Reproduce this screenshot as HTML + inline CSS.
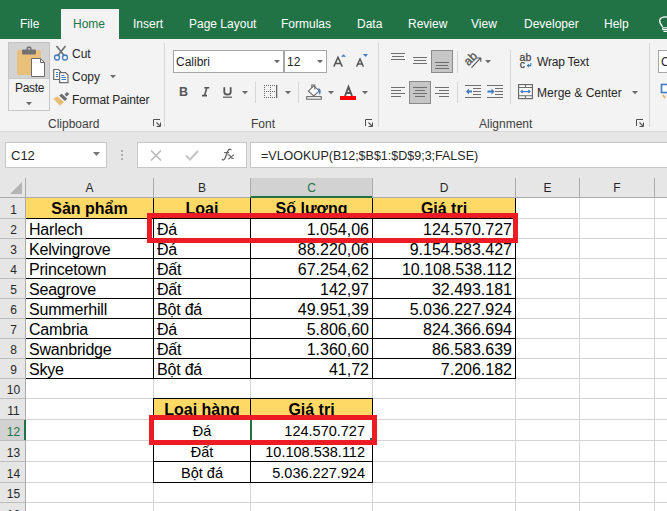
<!DOCTYPE html>
<html><head><meta charset="utf-8">
<style>
html,body{margin:0;padding:0;width:667px;height:511px;overflow:hidden;background:#fff;font-family:"Liberation Sans", sans-serif;}
body>div,body>span,body>svg{position:absolute;}
span{white-space:nowrap;}
</style></head><body>
<div style="left:0px;top:0px;width:667px;height:39px;background:#217346"></div><div style="left:61px;top:9px;width:58px;height:30px;background:#f3f3f3"></div><span style="left:20px;top:17px;font-size:12px;color:#ffffff;line-height:14px">File</span><span style="left:73px;top:17px;font-size:12px;color:#217346;line-height:14px">Home</span><span style="left:133px;top:17px;font-size:12px;color:#ffffff;line-height:14px">Insert</span><span style="left:189px;top:17px;font-size:12px;color:#ffffff;line-height:14px">Page Layout</span><span style="left:281px;top:17px;font-size:12px;color:#ffffff;line-height:14px">Formulas</span><span style="left:357px;top:17px;font-size:12px;color:#ffffff;line-height:14px">Data</span><span style="left:408px;top:17px;font-size:12px;color:#ffffff;line-height:14px">Review</span><span style="left:471px;top:17px;font-size:12px;color:#ffffff;line-height:14px">View</span><span style="left:524px;top:17px;font-size:12px;color:#ffffff;line-height:14px">Developer</span><span style="left:604px;top:17px;font-size:12px;color:#ffffff;line-height:14px">Help</span><div style="left:0px;top:39px;width:667px;height:92px;background:#f3f3f3"></div><div style="left:0px;top:131px;width:667px;height:1px;background:#d9d9d9"></div><div style="left:0px;top:132px;width:667px;height:46px;background:#e6e6e6"></div><div style="left:8px;top:42px;width:42px;height:37px;background:#d3d3d3;box-sizing:border-box;border:1px solid #c3c3c3;border-bottom:none"></div><div style="left:8px;top:78px;width:42px;height:33px;box-sizing:border-box;border:1px solid #c8c8c8"></div><span style="left:15px;top:81px;font-size:12px;color:#262626;line-height:14px;letter-spacing:-0.3px">Paste</span><svg style="left:26px;top:102px;" width="6" height="4" viewBox="0 0 6 4"><path d="M0 0 H6 L3 3.2 Z" fill="#6a6a6a"/></svg><span style="left:72px;top:47px;font-size:12px;color:#262626;line-height:14px">Cut</span><span style="left:72px;top:70px;font-size:12px;color:#262626;line-height:14px">Copy</span><svg style="left:110px;top:75px;" width="6" height="4" viewBox="0 0 6 4"><path d="M0 0 H6 L3 3.2 Z" fill="#6a6a6a"/></svg><span style="left:72px;top:93px;font-size:12px;color:#262626;line-height:14px;letter-spacing:-0.15px">Format Painter</span><span style="left:48px;top:117px;font-size:12px;color:#404040;line-height:14px">Clipboard</span><div style="left:164px;top:43px;width:1px;height:84px;background:#d6d6d6"></div><div style="left:173px;top:50px;width:111px;height:23px;box-sizing:border-box;border:1px solid #a6a6a6;background:#fff"></div><div style="left:284px;top:50px;width:43px;height:23px;box-sizing:border-box;border:1px solid #a6a6a6;background:#fff"></div><span style="left:176px;top:55px;font-size:12px;color:#262626;line-height:14px">Calibri</span><span style="left:287px;top:55px;font-size:12px;color:#262626;line-height:14px">12</span><svg style="left:274px;top:60px;" width="6" height="4" viewBox="0 0 6 4"><path d="M0 0 H6 L3 3.2 Z" fill="#6a6a6a"/></svg><svg style="left:317px;top:60px;" width="6" height="4" viewBox="0 0 6 4"><path d="M0 0 H6 L3 3.2 Z" fill="#6a6a6a"/></svg><span style="left:179px;top:85px;font-size:12.5px;font-weight:bold;color:#555;line-height:14px">B</span><svg style="left:242px;top:91px;" width="6" height="4" viewBox="0 0 6 4"><path d="M0 0 H6 L3 3.2 Z" fill="#6a6a6a"/></svg><div style="left:255px;top:82px;width:1px;height:21px;background:#d6d6d6"></div><svg style="left:285px;top:91px;" width="6" height="4" viewBox="0 0 6 4"><path d="M0 0 H6 L3 3.2 Z" fill="#6a6a6a"/></svg><div style="left:298px;top:82px;width:1px;height:21px;background:#d6d6d6"></div><svg style="left:328px;top:91px;" width="6" height="4" viewBox="0 0 6 4"><path d="M0 0 H6 L3 3.2 Z" fill="#6a6a6a"/></svg><svg style="left:362px;top:91px;" width="6" height="4" viewBox="0 0 6 4"><path d="M0 0 H6 L3 3.2 Z" fill="#6a6a6a"/></svg><span style="left:251px;top:117px;font-size:12px;color:#404040;line-height:14px">Font</span><div style="left:378px;top:43px;width:1px;height:84px;background:#d6d6d6"></div><div style="left:431px;top:50px;width:22px;height:23px;background:#c6c6c6;box-sizing:border-box;border:1px solid #8a8a8a"></div><div style="left:457px;top:51px;width:1px;height:22px;background:#d6d6d6"></div><svg style="left:485px;top:60px;" width="6" height="4" viewBox="0 0 6 4"><path d="M0 0 H6 L3 3.2 Z" fill="#6a6a6a"/></svg><div style="left:409px;top:81px;width:22px;height:23px;background:#c6c6c6;box-sizing:border-box;border:1px solid #8a8a8a"></div><div style="left:457px;top:82px;width:1px;height:21px;background:#d6d6d6"></div><div style="left:510px;top:50px;width:1px;height:54px;background:#d6d6d6"></div><span style="left:537px;top:55px;font-size:12px;color:#262626;line-height:14px;letter-spacing:-0.2px">Wrap Text</span><span style="left:537px;top:86px;font-size:12px;color:#262626;line-height:14px">Merge &amp; Center</span><svg style="left:632px;top:91px;" width="6" height="4" viewBox="0 0 6 4"><path d="M0 0 H6 L3 3.2 Z" fill="#6a6a6a"/></svg><span style="left:479px;top:117px;font-size:12px;color:#404040;line-height:14px">Alignment</span><div style="left:649px;top:43px;width:1px;height:84px;background:#d6d6d6"></div><div style="left:658px;top:50px;width:12px;height:23px;box-sizing:border-box;border:1px solid #a6a6a6;background:#fff"></div><span style="left:661px;top:55px;font-size:12px;color:#262626;line-height:14px">C</span><div style="left:5px;top:142px;width:102px;height:26px;box-sizing:border-box;border:1px solid #c6c6c6;background:#fff"></div><span style="left:11px;top:149px;font-size:13px;color:#262626;line-height:14px">C12</span><svg style="left:93px;top:152px;" width="7" height="4" viewBox="0 0 7 4"><path d="M0 0 H7 L3.5 4 Z" fill="#777"/></svg><svg style="left:120px;top:149px;" width="4" height="12" viewBox="0 0 4 12"><circle cx="2" cy="2" r="1" fill="#9a9a9a"/><circle cx="2" cy="6" r="1" fill="#9a9a9a"/><circle cx="2" cy="10" r="1" fill="#9a9a9a"/></svg><div style="left:137px;top:142px;width:110px;height:26px;box-sizing:border-box;border:1px solid #c6c6c6;background:#fff"></div><svg style="left:150px;top:150px;" width="12" height="11" viewBox="0 0 12 11"><path d="M1 0.5 L11 10.5 M11 0.5 L1 10.5" stroke="#b8b8b8" stroke-width="1.5"/></svg><svg style="left:185px;top:150px;" width="14" height="11" viewBox="0 0 14 11"><path d="M1 5.5 L5 9.5 L13 1" stroke="#c4c4c4" stroke-width="2" fill="none"/></svg><svg style="left:0;top:135px" width="667" height="40"><g transform="translate(0 -135)" fill="none" stroke="#666" stroke-linecap="round"><path d="M222.4 159.6 Q223.8 160.6 225 158.2 L227.9 151 Q229 148.6 230.9 149.6" stroke-width="1.4"/><path d="M224.6 152.6 H228.6" stroke-width="1.2"/><path d="M228.2 155 Q229.6 154.6 230.4 156.6 Q231.3 158.8 233.2 158.4" stroke-width="1.2"/><path d="M233.6 154.9 L228.6 158.9" stroke-width="1.2"/></g></svg><div style="left:250px;top:142px;width:420px;height:26px;box-sizing:border-box;border:1px solid #c6c6c6;background:#fff"></div><span style="left:261px;top:149px;font-size:12.5px;color:#262626;line-height:14px">=VLOOKUP(B12;$B$1:$D$9;3;FALSE)</span><div style="left:0px;top:178px;width:667px;height:19px;background:#e6e6e6"></div><div style="left:250px;top:178px;width:122px;height:19px;background:#d2d2d2"></div><div style="left:0px;top:197px;width:667px;height:1px;background:#ababab"></div><div style="left:250px;top:196px;width:122px;height:2px;background:#217346"></div><div style="left:153px;top:178px;width:1px;height:19px;background:#ababab"></div><div style="left:250px;top:178px;width:1px;height:19px;background:#ababab"></div><div style="left:372px;top:178px;width:1px;height:19px;background:#ababab"></div><div style="left:515px;top:178px;width:1px;height:19px;background:#ababab"></div><div style="left:579px;top:178px;width:1px;height:19px;background:#ababab"></div><div style="left:654px;top:178px;width:1px;height:19px;background:#ababab"></div><div style="left:25px;top:178px;width:1px;height:334px;background:#ababab"></div><span style="left:26px;top:181px;width:127px;text-align:center;font-size:12px;line-height:14px;color:#262626">A</span><span style="left:154px;top:181px;width:96px;text-align:center;font-size:12px;line-height:14px;color:#262626">B</span><span style="left:251px;top:181px;width:121px;text-align:center;font-size:12px;line-height:14px;color:#217346">C</span><span style="left:373px;top:181px;width:142px;text-align:center;font-size:12px;line-height:14px;color:#262626">D</span><span style="left:516px;top:181px;width:63px;text-align:center;font-size:12px;line-height:14px;color:#262626">E</span><span style="left:580px;top:181px;width:74px;text-align:center;font-size:12px;line-height:14px;color:#262626">F</span><svg style="left:9px;top:181px" width="14" height="14"><path d="M13 1 V13 H1 Z" fill="#b4b4b4"/></svg><div style="left:0px;top:198px;width:25px;height:313px;background:#e6e6e6"></div><div style="left:0px;top:420px;width:25px;height:20px;background:#d2d2d2"></div><div style="left:0px;top:218px;width:25px;height:1px;background:#bdbdbd"></div><div style="left:0px;top:238px;width:25px;height:1px;background:#bdbdbd"></div><div style="left:0px;top:258px;width:25px;height:1px;background:#bdbdbd"></div><div style="left:0px;top:278px;width:25px;height:1px;background:#bdbdbd"></div><div style="left:0px;top:298px;width:25px;height:1px;background:#bdbdbd"></div><div style="left:0px;top:318px;width:25px;height:1px;background:#bdbdbd"></div><div style="left:0px;top:338px;width:25px;height:1px;background:#bdbdbd"></div><div style="left:0px;top:358px;width:25px;height:1px;background:#bdbdbd"></div><div style="left:0px;top:378px;width:25px;height:1px;background:#bdbdbd"></div><div style="left:0px;top:398px;width:25px;height:1px;background:#bdbdbd"></div><div style="left:0px;top:419px;width:25px;height:1px;background:#bdbdbd"></div><div style="left:0px;top:440px;width:25px;height:1px;background:#bdbdbd"></div><div style="left:0px;top:461px;width:25px;height:1px;background:#bdbdbd"></div><div style="left:0px;top:482px;width:25px;height:1px;background:#bdbdbd"></div><div style="left:0px;top:502px;width:25px;height:1px;background:#bdbdbd"></div><div style="left:24px;top:420px;width:2px;height:20px;background:#217346"></div><span style="left:1px;top:203px;width:25px;text-align:center;font-size:12px;line-height:14px;color:#262626">1</span><span style="left:1px;top:223px;width:25px;text-align:center;font-size:12px;line-height:14px;color:#262626">2</span><span style="left:1px;top:243px;width:25px;text-align:center;font-size:12px;line-height:14px;color:#262626">3</span><span style="left:1px;top:263px;width:25px;text-align:center;font-size:12px;line-height:14px;color:#262626">4</span><span style="left:1px;top:283px;width:25px;text-align:center;font-size:12px;line-height:14px;color:#262626">5</span><span style="left:1px;top:303px;width:25px;text-align:center;font-size:12px;line-height:14px;color:#262626">6</span><span style="left:1px;top:323px;width:25px;text-align:center;font-size:12px;line-height:14px;color:#262626">7</span><span style="left:1px;top:343px;width:25px;text-align:center;font-size:12px;line-height:14px;color:#262626">8</span><span style="left:1px;top:363px;width:25px;text-align:center;font-size:12px;line-height:14px;color:#262626">9</span><span style="left:1px;top:383px;width:25px;text-align:center;font-size:12px;line-height:14px;color:#262626">10</span><span style="left:1px;top:404px;width:25px;text-align:center;font-size:12px;line-height:14px;color:#262626">11</span><span style="left:1px;top:425px;width:25px;text-align:center;font-size:12px;line-height:14px;color:#217346">12</span><span style="left:1px;top:446px;width:25px;text-align:center;font-size:12px;line-height:14px;color:#262626">13</span><span style="left:1px;top:467px;width:25px;text-align:center;font-size:12px;line-height:14px;color:#262626">14</span><span style="left:1px;top:487px;width:25px;text-align:center;font-size:12px;line-height:14px;color:#262626">15</span><span style="left:1px;top:508px;width:25px;text-align:center;font-size:12px;line-height:14px;color:#262626">16</span><div style="left:26px;top:198px;width:641px;height:313px;background:#fff"></div><div style="left:26px;top:218px;width:641px;height:1px;background:#d4d4d4"></div><div style="left:26px;top:238px;width:641px;height:1px;background:#d4d4d4"></div><div style="left:26px;top:258px;width:641px;height:1px;background:#d4d4d4"></div><div style="left:26px;top:278px;width:641px;height:1px;background:#d4d4d4"></div><div style="left:26px;top:298px;width:641px;height:1px;background:#d4d4d4"></div><div style="left:26px;top:318px;width:641px;height:1px;background:#d4d4d4"></div><div style="left:26px;top:338px;width:641px;height:1px;background:#d4d4d4"></div><div style="left:26px;top:358px;width:641px;height:1px;background:#d4d4d4"></div><div style="left:26px;top:378px;width:641px;height:1px;background:#d4d4d4"></div><div style="left:26px;top:398px;width:641px;height:1px;background:#d4d4d4"></div><div style="left:26px;top:419px;width:641px;height:1px;background:#d4d4d4"></div><div style="left:26px;top:440px;width:641px;height:1px;background:#d4d4d4"></div><div style="left:26px;top:461px;width:641px;height:1px;background:#d4d4d4"></div><div style="left:26px;top:482px;width:641px;height:1px;background:#d4d4d4"></div><div style="left:26px;top:502px;width:641px;height:1px;background:#d4d4d4"></div><div style="left:153px;top:198px;width:1px;height:313px;background:#d4d4d4"></div><div style="left:250px;top:198px;width:1px;height:313px;background:#d4d4d4"></div><div style="left:372px;top:198px;width:1px;height:313px;background:#d4d4d4"></div><div style="left:515px;top:198px;width:1px;height:313px;background:#d4d4d4"></div><div style="left:579px;top:198px;width:1px;height:313px;background:#d4d4d4"></div><div style="left:654px;top:198px;width:1px;height:313px;background:#d4d4d4"></div><div style="left:26px;top:198px;width:489px;height:20px;background:#ffd966"></div><div style="left:154px;top:399px;width:218px;height:20px;background:#ffd966"></div><div style="left:153px;top:198px;width:1px;height:181px;background:#000"></div><div style="left:250px;top:198px;width:1px;height:181px;background:#000"></div><div style="left:372px;top:198px;width:1px;height:181px;background:#000"></div><div style="left:515px;top:198px;width:1px;height:181px;background:#000"></div><div style="left:26px;top:218px;width:490px;height:1px;background:#000"></div><div style="left:26px;top:238px;width:490px;height:1px;background:#000"></div><div style="left:26px;top:258px;width:490px;height:1px;background:#000"></div><div style="left:26px;top:278px;width:490px;height:1px;background:#000"></div><div style="left:26px;top:298px;width:490px;height:1px;background:#000"></div><div style="left:26px;top:318px;width:490px;height:1px;background:#000"></div><div style="left:26px;top:338px;width:490px;height:1px;background:#000"></div><div style="left:26px;top:358px;width:490px;height:1px;background:#000"></div><div style="left:26px;top:378px;width:490px;height:1px;background:#000"></div><div style="left:153px;top:398px;width:1px;height:85px;background:#000"></div><div style="left:250px;top:398px;width:1px;height:85px;background:#000"></div><div style="left:372px;top:398px;width:1px;height:85px;background:#000"></div><div style="left:153px;top:398px;width:220px;height:1px;background:#000"></div><div style="left:153px;top:419px;width:220px;height:1px;background:#000"></div><div style="left:153px;top:440px;width:220px;height:1px;background:#000"></div><div style="left:153px;top:461px;width:220px;height:1px;background:#000"></div><div style="left:153px;top:482px;width:220px;height:1px;background:#000"></div><div style="left:26px;top:198px;width:127px;height:20px;overflow:hidden;box-sizing:border-box;"><span style="position:absolute;left:0;right:0;bottom:0;;text-align:center;font-size:16px;line-height:16px;color:#000;font-weight:bold;bottom:1px">Sản phẩm</span></div><div style="left:154px;top:198px;width:96px;height:20px;overflow:hidden;box-sizing:border-box;"><span style="position:absolute;left:0;right:0;bottom:0;;text-align:center;font-size:16px;line-height:16px;color:#000;font-weight:bold;bottom:1px">Loại</span></div><div style="left:251px;top:198px;width:121px;height:20px;overflow:hidden;box-sizing:border-box;"><span style="position:absolute;left:0;right:0;bottom:0;;text-align:center;font-size:16px;line-height:16px;color:#000;font-weight:bold;bottom:1px">Số lượng</span></div><div style="left:373px;top:198px;width:142px;height:20px;overflow:hidden;box-sizing:border-box;"><span style="position:absolute;left:0;right:0;bottom:0;;text-align:center;font-size:16px;line-height:16px;color:#000;font-weight:bold;bottom:1px">Giá trị</span></div><div style="left:26px;top:219px;width:127px;height:19px;overflow:hidden;box-sizing:border-box;padding-left:3px"><span style="position:absolute;left:0;right:0;bottom:0;padding-left:3px;text-align:left;font-size:16px;line-height:16px;color:#000;letter-spacing:-0.2px">Harlech</span></div><div style="left:154px;top:219px;width:96px;height:19px;overflow:hidden;box-sizing:border-box;padding-left:3px"><span style="position:absolute;left:0;right:0;bottom:0;padding-left:3px;text-align:left;font-size:16px;line-height:16px;color:#000;letter-spacing:-0.2px">Đá</span></div><div style="left:251px;top:219px;width:121px;height:19px;overflow:hidden;box-sizing:border-box;padding-right:3px"><span style="position:absolute;left:0;right:0;bottom:0;padding-right:3px;text-align:right;font-size:16px;line-height:16px;color:#000;">1.054,06</span></div><div style="left:373px;top:219px;width:142px;height:19px;overflow:hidden;box-sizing:border-box;padding-right:3px"><span style="position:absolute;left:0;right:0;bottom:0;padding-right:3px;text-align:right;font-size:16px;line-height:16px;color:#000;">124.570.727</span></div><div style="left:26px;top:239px;width:127px;height:19px;overflow:hidden;box-sizing:border-box;padding-left:3px"><span style="position:absolute;left:0;right:0;bottom:0;padding-left:3px;text-align:left;font-size:16px;line-height:16px;color:#000;letter-spacing:-0.2px">Kelvingrove</span></div><div style="left:154px;top:239px;width:96px;height:19px;overflow:hidden;box-sizing:border-box;padding-left:3px"><span style="position:absolute;left:0;right:0;bottom:0;padding-left:3px;text-align:left;font-size:16px;line-height:16px;color:#000;letter-spacing:-0.2px">Đá</span></div><div style="left:251px;top:239px;width:121px;height:19px;overflow:hidden;box-sizing:border-box;padding-right:3px"><span style="position:absolute;left:0;right:0;bottom:0;padding-right:3px;text-align:right;font-size:16px;line-height:16px;color:#000;">88.220,06</span></div><div style="left:373px;top:239px;width:142px;height:19px;overflow:hidden;box-sizing:border-box;padding-right:3px"><span style="position:absolute;left:0;right:0;bottom:0;padding-right:3px;text-align:right;font-size:16px;line-height:16px;color:#000;">9.154.583.427</span></div><div style="left:26px;top:259px;width:127px;height:19px;overflow:hidden;box-sizing:border-box;padding-left:3px"><span style="position:absolute;left:0;right:0;bottom:0;padding-left:3px;text-align:left;font-size:16px;line-height:16px;color:#000;letter-spacing:-0.2px">Princetown</span></div><div style="left:154px;top:259px;width:96px;height:19px;overflow:hidden;box-sizing:border-box;padding-left:3px"><span style="position:absolute;left:0;right:0;bottom:0;padding-left:3px;text-align:left;font-size:16px;line-height:16px;color:#000;letter-spacing:-0.2px">Đất</span></div><div style="left:251px;top:259px;width:121px;height:19px;overflow:hidden;box-sizing:border-box;padding-right:3px"><span style="position:absolute;left:0;right:0;bottom:0;padding-right:3px;text-align:right;font-size:16px;line-height:16px;color:#000;">67.254,62</span></div><div style="left:373px;top:259px;width:142px;height:19px;overflow:hidden;box-sizing:border-box;padding-right:3px"><span style="position:absolute;left:0;right:0;bottom:0;padding-right:3px;text-align:right;font-size:16px;line-height:16px;color:#000;">10.108.538.112</span></div><div style="left:26px;top:279px;width:127px;height:19px;overflow:hidden;box-sizing:border-box;padding-left:3px"><span style="position:absolute;left:0;right:0;bottom:0;padding-left:3px;text-align:left;font-size:16px;line-height:16px;color:#000;letter-spacing:-0.2px">Seagrove</span></div><div style="left:154px;top:279px;width:96px;height:19px;overflow:hidden;box-sizing:border-box;padding-left:3px"><span style="position:absolute;left:0;right:0;bottom:0;padding-left:3px;text-align:left;font-size:16px;line-height:16px;color:#000;letter-spacing:-0.2px">Đất</span></div><div style="left:251px;top:279px;width:121px;height:19px;overflow:hidden;box-sizing:border-box;padding-right:3px"><span style="position:absolute;left:0;right:0;bottom:0;padding-right:3px;text-align:right;font-size:16px;line-height:16px;color:#000;">142,97</span></div><div style="left:373px;top:279px;width:142px;height:19px;overflow:hidden;box-sizing:border-box;padding-right:3px"><span style="position:absolute;left:0;right:0;bottom:0;padding-right:3px;text-align:right;font-size:16px;line-height:16px;color:#000;">32.493.181</span></div><div style="left:26px;top:299px;width:127px;height:19px;overflow:hidden;box-sizing:border-box;padding-left:3px"><span style="position:absolute;left:0;right:0;bottom:0;padding-left:3px;text-align:left;font-size:16px;line-height:16px;color:#000;letter-spacing:-0.2px">Summerhill</span></div><div style="left:154px;top:299px;width:96px;height:19px;overflow:hidden;box-sizing:border-box;padding-left:3px"><span style="position:absolute;left:0;right:0;bottom:0;padding-left:3px;text-align:left;font-size:16px;line-height:16px;color:#000;letter-spacing:-0.2px">Bột đá</span></div><div style="left:251px;top:299px;width:121px;height:19px;overflow:hidden;box-sizing:border-box;padding-right:3px"><span style="position:absolute;left:0;right:0;bottom:0;padding-right:3px;text-align:right;font-size:16px;line-height:16px;color:#000;">49.951,39</span></div><div style="left:373px;top:299px;width:142px;height:19px;overflow:hidden;box-sizing:border-box;padding-right:3px"><span style="position:absolute;left:0;right:0;bottom:0;padding-right:3px;text-align:right;font-size:16px;line-height:16px;color:#000;">5.036.227.924</span></div><div style="left:26px;top:319px;width:127px;height:19px;overflow:hidden;box-sizing:border-box;padding-left:3px"><span style="position:absolute;left:0;right:0;bottom:0;padding-left:3px;text-align:left;font-size:16px;line-height:16px;color:#000;letter-spacing:-0.2px">Cambria</span></div><div style="left:154px;top:319px;width:96px;height:19px;overflow:hidden;box-sizing:border-box;padding-left:3px"><span style="position:absolute;left:0;right:0;bottom:0;padding-left:3px;text-align:left;font-size:16px;line-height:16px;color:#000;letter-spacing:-0.2px">Đá</span></div><div style="left:251px;top:319px;width:121px;height:19px;overflow:hidden;box-sizing:border-box;padding-right:3px"><span style="position:absolute;left:0;right:0;bottom:0;padding-right:3px;text-align:right;font-size:16px;line-height:16px;color:#000;">5.806,60</span></div><div style="left:373px;top:319px;width:142px;height:19px;overflow:hidden;box-sizing:border-box;padding-right:3px"><span style="position:absolute;left:0;right:0;bottom:0;padding-right:3px;text-align:right;font-size:16px;line-height:16px;color:#000;">824.366.694</span></div><div style="left:26px;top:339px;width:127px;height:19px;overflow:hidden;box-sizing:border-box;padding-left:3px"><span style="position:absolute;left:0;right:0;bottom:0;padding-left:3px;text-align:left;font-size:16px;line-height:16px;color:#000;letter-spacing:-0.2px">Swanbridge</span></div><div style="left:154px;top:339px;width:96px;height:19px;overflow:hidden;box-sizing:border-box;padding-left:3px"><span style="position:absolute;left:0;right:0;bottom:0;padding-left:3px;text-align:left;font-size:16px;line-height:16px;color:#000;letter-spacing:-0.2px">Đất</span></div><div style="left:251px;top:339px;width:121px;height:19px;overflow:hidden;box-sizing:border-box;padding-right:3px"><span style="position:absolute;left:0;right:0;bottom:0;padding-right:3px;text-align:right;font-size:16px;line-height:16px;color:#000;">1.360,60</span></div><div style="left:373px;top:339px;width:142px;height:19px;overflow:hidden;box-sizing:border-box;padding-right:3px"><span style="position:absolute;left:0;right:0;bottom:0;padding-right:3px;text-align:right;font-size:16px;line-height:16px;color:#000;">86.583.639</span></div><div style="left:26px;top:359px;width:127px;height:19px;overflow:hidden;box-sizing:border-box;padding-left:3px"><span style="position:absolute;left:0;right:0;bottom:0;padding-left:3px;text-align:left;font-size:16px;line-height:16px;color:#000;letter-spacing:-0.2px">Skye</span></div><div style="left:154px;top:359px;width:96px;height:19px;overflow:hidden;box-sizing:border-box;padding-left:3px"><span style="position:absolute;left:0;right:0;bottom:0;padding-left:3px;text-align:left;font-size:16px;line-height:16px;color:#000;letter-spacing:-0.2px">Bột đá</span></div><div style="left:251px;top:359px;width:121px;height:19px;overflow:hidden;box-sizing:border-box;padding-right:3px"><span style="position:absolute;left:0;right:0;bottom:0;padding-right:3px;text-align:right;font-size:16px;line-height:16px;color:#000;">41,72</span></div><div style="left:373px;top:359px;width:142px;height:19px;overflow:hidden;box-sizing:border-box;padding-right:3px"><span style="position:absolute;left:0;right:0;bottom:0;padding-right:3px;text-align:right;font-size:16px;line-height:16px;color:#000;">7.206.182</span></div><div style="left:154px;top:399px;width:96px;height:20px;overflow:hidden;box-sizing:border-box;"><span style="position:absolute;left:0;right:0;bottom:0;;text-align:center;font-size:16px;line-height:16px;color:#000;font-weight:bold;bottom:1px">Loại hàng</span></div><div style="left:251px;top:399px;width:121px;height:20px;overflow:hidden;box-sizing:border-box;"><span style="position:absolute;left:0;right:0;bottom:0;;text-align:center;font-size:16px;line-height:16px;color:#000;font-weight:bold;bottom:1px">Giá trị</span></div><div style="left:154px;top:420px;width:96px;height:20px;overflow:hidden;box-sizing:border-box;"><span style="position:absolute;left:0;right:0;bottom:0;;text-align:center;font-size:14.5px;line-height:14.5px;color:#000;bottom:2px">Đá</span></div><div style="left:251px;top:420px;width:121px;height:20px;overflow:hidden;box-sizing:border-box;padding-right:3px"><span style="position:absolute;left:0;right:0;bottom:0;padding-right:3px;text-align:right;font-size:14.5px;line-height:14.5px;color:#000;bottom:2px;padding-right:7px">124.570.727</span></div><div style="left:154px;top:441px;width:96px;height:20px;overflow:hidden;box-sizing:border-box;"><span style="position:absolute;left:0;right:0;bottom:0;;text-align:center;font-size:14.5px;line-height:14.5px;color:#000;bottom:2px">Đất</span></div><div style="left:251px;top:441px;width:121px;height:20px;overflow:hidden;box-sizing:border-box;padding-right:3px"><span style="position:absolute;left:0;right:0;bottom:0;padding-right:3px;text-align:right;font-size:14.5px;line-height:14.5px;color:#000;bottom:2px;padding-right:7px">10.108.538.112</span></div><div style="left:154px;top:462px;width:96px;height:20px;overflow:hidden;box-sizing:border-box;"><span style="position:absolute;left:0;right:0;bottom:0;;text-align:center;font-size:14.5px;line-height:14.5px;color:#000;bottom:2px">Bột đá</span></div><div style="left:251px;top:462px;width:121px;height:20px;overflow:hidden;box-sizing:border-box;padding-right:3px"><span style="position:absolute;left:0;right:0;bottom:0;padding-right:3px;text-align:right;font-size:14.5px;line-height:14.5px;color:#000;bottom:2px;padding-right:7px">5.036.227.924</span></div><div style="left:250px;top:419px;width:2px;height:22px;background:#217346"></div><div style="left:370px;top:439px;width:4px;height:4px;background:#217346;border:1px solid #fff"></div><div style="left:147px;top:213px;width:371px;height:30px;box-sizing:border-box;border:5px solid #ed1c24"></div><div style="left:149px;top:415px;width:228px;height:30px;box-sizing:border-box;border:5px solid #ed1c24"></div><div style="left:370px;top:438px;width:2px;height:2px;background:#217346"></div><svg style="left:0;top:0" width="667" height="135"><rect x="17" y="50" width="24" height="25" rx="2" fill="#e8c07a"/><rect x="22" y="49.5" width="14" height="5" rx="1" fill="#727272"/><rect x="26.5" y="46.5" width="5" height="4" rx="1.5" fill="#727272"/><rect x="28.2" y="48" width="1.8" height="1.6" fill="#d3d3d3"/><path d="M31.5 58.5 H40.5 L44.5 62.5 V76.5 H31.5 Z" fill="#fff" stroke="#6a6a6a" stroke-width="1"/><path d="M40.5 58.5 V62.5 H44.5" fill="none" stroke="#6a6a6a" stroke-width="1"/><path d="M56.5 46 L64.5 56 M65.5 46 L57.5 56" stroke="#6e6e6e" stroke-width="1.6" fill="none"/><circle cx="57" cy="57.5" r="2.5" fill="none" stroke="#3f7bc0" stroke-width="1.3"/><circle cx="65" cy="57.5" r="2.5" fill="none" stroke="#3f7bc0" stroke-width="1.3"/><path d="M53.7 69.5 H58.5 L60.5 71.5 V79.5 H53.7 Z" fill="#fff" stroke="#6a6a6a" stroke-width="1.2"/><path d="M59.6 72.6 H65.5 L68 75 V82.6 H59.6 Z" fill="#fff" stroke="#6a6a6a" stroke-width="1.2"/><path d="M56 72.5 H58 M56 74.5 H58 M56 76.5 H58 M61.5 75.5 H64.5 M61.5 77.5 H66 M61.5 79.5 H66" stroke="#3f7bc0" stroke-width="1"/><path d="M53.2 98.4 L57.6 96.6 L64 102 L60 105.8 Z" fill="#e8bd74"/><path d="M59.2 95.4 L61.8 93.8 L67.2 98.8 L64.8 100.9 Z" fill="#6a6a6a"/><path d="M64.6 94.6 L66.9 91.9 L69.3 93.9 L66.6 96.5 Z" fill="#6a6a6a"/><path d="M153.5 126 V119.5 H160" fill="none" stroke="#505050" stroke-width="1"/><path d="M156.5 122.5 L160 126" stroke="#505050" stroke-width="1.1"/><path d="M156.5 126.5 H160.5 V122.5" fill="none" stroke="#505050" stroke-width="1"/><path d="M333.8 66.6 L338 57.3 L342.2 66.6 M335.3 63.4 H340.7" fill="none" stroke="#555" stroke-width="1.5"/><path d="M341 56.8 L343.5 54.2 L346 56.8 Z" fill="#3f7bc0"/><path d="M356.6 66.6 L360 58.9 L363.4 66.6 M357.8 64 H362.2" fill="none" stroke="#555" stroke-width="1.4"/><path d="M363 54 H368 L365.5 57 Z" fill="#3f7bc0"/><path d="M204.3 87.7 H209.3 M202 95.6 H207 M206.8 87.7 L204.5 95.6" fill="none" stroke="#555" stroke-width="1.6"/><path d="M224.3 87.2 V92 Q224.3 94.6 227.5 94.6 Q230.7 94.6 230.7 92 V87.2" fill="none" stroke="#555" stroke-width="1.8"/><rect x="223" y="96.6" width="9" height="1.2" fill="#555"/><rect x="264" y="85" width="1" height="1" fill="#6a6a6a"/><rect x="264" y="91" width="1" height="1" fill="#6a6a6a"/><rect x="264" y="97" width="1" height="1" fill="#6a6a6a"/><rect x="266" y="85" width="1" height="1" fill="#6a6a6a"/><rect x="266" y="91" width="1" height="1" fill="#6a6a6a"/><rect x="266" y="97" width="1" height="1" fill="#6a6a6a"/><rect x="268" y="85" width="1" height="1" fill="#6a6a6a"/><rect x="268" y="91" width="1" height="1" fill="#6a6a6a"/><rect x="268" y="97" width="1" height="1" fill="#6a6a6a"/><rect x="270" y="85" width="1" height="1" fill="#6a6a6a"/><rect x="270" y="91" width="1" height="1" fill="#6a6a6a"/><rect x="270" y="97" width="1" height="1" fill="#6a6a6a"/><rect x="272" y="85" width="1" height="1" fill="#6a6a6a"/><rect x="272" y="91" width="1" height="1" fill="#6a6a6a"/><rect x="272" y="97" width="1" height="1" fill="#6a6a6a"/><rect x="274" y="85" width="1" height="1" fill="#6a6a6a"/><rect x="274" y="91" width="1" height="1" fill="#6a6a6a"/><rect x="274" y="97" width="1" height="1" fill="#6a6a6a"/><rect x="264" y="87" width="1" height="1" fill="#6a6a6a"/><rect x="264" y="89" width="1" height="1" fill="#6a6a6a"/><rect x="264" y="93" width="1" height="1" fill="#6a6a6a"/><rect x="264" y="95" width="1" height="1" fill="#6a6a6a"/><rect x="270" y="87" width="1" height="1" fill="#6a6a6a"/><rect x="270" y="89" width="1" height="1" fill="#6a6a6a"/><rect x="270" y="93" width="1" height="1" fill="#6a6a6a"/><rect x="270" y="95" width="1" height="1" fill="#6a6a6a"/><rect x="276" y="85" width="1.3" height="13" fill="#6a6a6a"/><path d="M308.4 91.2 L313.7 85.9 L319.3 90.8 L313.8 96 Z" fill="#fff" stroke="#6a6a6a" stroke-width="1.1"/><path d="M311.8 88 V85 H314.8 V89.5" fill="none" stroke="#6a6a6a" stroke-width="1.1"/><path d="M318.3 88 Q322.5 89.5 319.6 95 Q318.6 91.5 318.3 88 Z" fill="#3f7bc0"/><rect x="306.7" y="96.6" width="14.6" height="2.6" fill="#fff" stroke="#6a6a6a" stroke-width="1.1"/><path d="M345 96 L348.5 86.8 L352 96 M346.3 93 H350.7" fill="none" stroke="#555" stroke-width="1.9"/><rect x="340" y="96" width="16" height="4" fill="#ff0000"/><path d="M365.5 126 V119.5 H372" fill="none" stroke="#505050" stroke-width="1"/><path d="M368.5 122.5 L372 126" stroke="#505050" stroke-width="1.1"/><path d="M368.5 126.5 H372.5 V122.5" fill="none" stroke="#505050" stroke-width="1"/><rect x="391" y="53" width="14" height="1" fill="#6e6e6e"/><rect x="392" y="56" width="12" height="1" fill="#6e6e6e"/><rect x="391" y="59" width="14" height="1" fill="#6e6e6e"/><rect x="413" y="57" width="14" height="1" fill="#6e6e6e"/><rect x="414" y="60" width="12" height="1" fill="#6e6e6e"/><rect x="413" y="63" width="14" height="1" fill="#6e6e6e"/><rect x="435" y="62" width="14" height="1" fill="#6e6e6e"/><rect x="436" y="65" width="12" height="1" fill="#6e6e6e"/><rect x="435" y="68" width="14" height="1" fill="#6e6e6e"/><g transform="translate(470.4 58) rotate(-45)"><text x="-7.2" y="4.4" font-family="Liberation Sans" font-size="12" fill="#555" stroke="#555" stroke-width="0.35">ab</text></g><path d="M471.5 67.7 L480.5 58.2 M477 58 H480.8 V61.8" fill="none" stroke="#555" stroke-width="1.1"/><rect x="391" y="87" width="14" height="1" fill="#6e6e6e"/><rect x="391" y="90" width="10" height="1" fill="#6e6e6e"/><rect x="391" y="93" width="14" height="1" fill="#6e6e6e"/><rect x="391" y="96" width="10" height="1" fill="#6e6e6e"/><rect x="413" y="87" width="14" height="1" fill="#6e6e6e"/><rect x="415" y="90" width="10" height="1" fill="#6e6e6e"/><rect x="413" y="93" width="14" height="1" fill="#6e6e6e"/><rect x="415" y="96" width="10" height="1" fill="#6e6e6e"/><rect x="435" y="87" width="14" height="1" fill="#6e6e6e"/><rect x="439" y="90" width="10" height="1" fill="#6e6e6e"/><rect x="435" y="93" width="14" height="1" fill="#6e6e6e"/><rect x="439" y="96" width="10" height="1" fill="#6e6e6e"/><rect x="465" y="85" width="16" height="1" fill="#6e6e6e"/><rect x="473" y="88" width="8" height="1" fill="#6e6e6e"/><rect x="473" y="91" width="8" height="1" fill="#6e6e6e"/><rect x="473" y="94" width="8" height="1" fill="#6e6e6e"/><rect x="465" y="97" width="16" height="1" fill="#6e6e6e"/><path d="M466 91.5 L469 88.5 V90.5 H472 V92.5 H469 V94.5 Z" fill="#3f7bc0"/><rect x="487" y="85" width="16" height="1" fill="#6e6e6e"/><rect x="495" y="88" width="8" height="1" fill="#6e6e6e"/><rect x="495" y="91" width="8" height="1" fill="#6e6e6e"/><rect x="495" y="94" width="8" height="1" fill="#6e6e6e"/><rect x="487" y="97" width="16" height="1" fill="#6e6e6e"/><path d="M494.5 91.5 L491.5 88.5 V90.5 H487.5 V92.5 H491.5 V94.5 Z" fill="#3f7bc0"/><text x="519.6" y="60.6" font-family="Liberation Sans" font-size="10.5" fill="#444" stroke="#444" stroke-width="0.25">ab</text><text x="519.8" y="67.8" font-family="Liberation Sans" font-size="10.5" fill="#444" stroke="#444" stroke-width="0.25">c</text><path d="M530.8 63 V65.6 H527.5 M529 64.2 L527.5 65.6 L529 67" fill="none" stroke="#3f7bc0" stroke-width="1.1"/><rect x="518.6" y="84.6" width="13.8" height="14" fill="#fff" stroke="#6a6a6a" stroke-width="1.2"/><path d="M518.6 87.5 H532.4 M518.6 95.7 H532.4 M525.5 84.6 V87.5 M525.5 95.7 V98.6" stroke="#6a6a6a" stroke-width="1.1" fill="none"/><path d="M521 91.6 H530 M522.6 90 L521 91.6 L522.6 93.2 M528.4 90 L530 91.6 L528.4 93.2" stroke="#3f7bc0" stroke-width="1.2" fill="none"/><path d="M636.5 126 V119.5 H643" fill="none" stroke="#505050" stroke-width="1"/><path d="M639.5 122.5 L643 126" stroke="#505050" stroke-width="1.1"/><path d="M639.5 126.5 H643.5 V122.5" fill="none" stroke="#505050" stroke-width="1"/><rect x="661.5" y="84.5" width="8" height="8" fill="#fff" stroke="#3f7bc0" stroke-width="1.6"/><path d="M663 95 L665 98" stroke="#e9a94b" stroke-width="1.6"/><path d="M662.6 26.8 C661 24.8 659.6 23 659.6 20.8 C659.6 17.8 662.5 16.8 666.5 16.8 C670.5 16.8 673.4 17.8 673.4 20.8 C673.4 23 672 24.8 670.4 26.8" fill="none" stroke="#fff" stroke-width="1.3"/><rect x="662.8" y="27.8" width="8" height="1.8" fill="none" stroke="#fff" stroke-width="1.1"/><rect x="663.5" y="30.8" width="6" height="1.2" fill="#fff"/></svg>
</body></html>
